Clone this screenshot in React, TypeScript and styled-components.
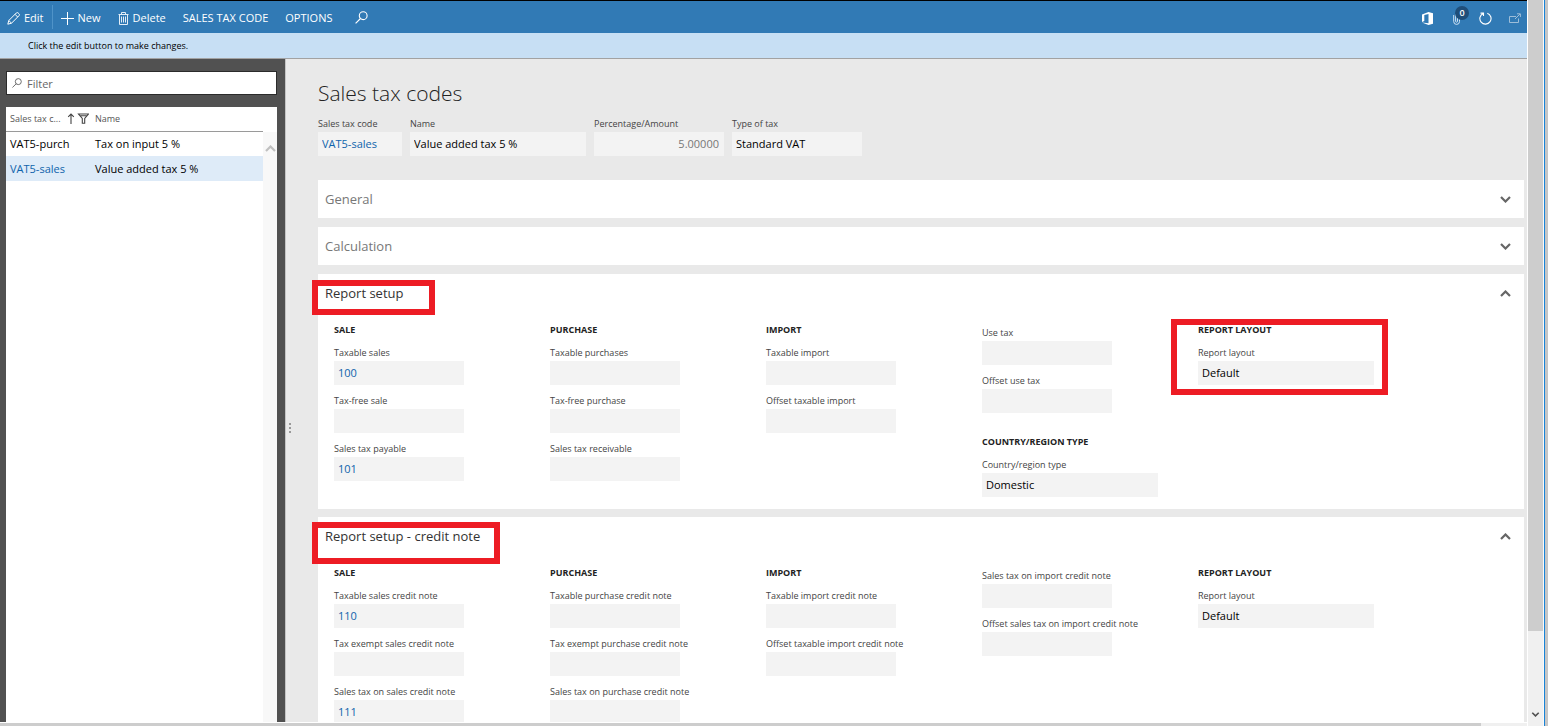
import React, { useId } from "react";
import styled, { createGlobalStyle } from "styled-components";

const GlobalStyle = createGlobalStyle`
  * { box-sizing: border-box; }
  html, body { margin: 0; padding: 0; overflow: hidden; }
  body, button, input { font-family: "Open Sans", "Noto Sans", sans-serif; }
`;

const Window = styled.div`
  display: flex;
  height: 100vh;
  overflow: hidden;
  background: #fff;
`;

const Page = styled.div`
  flex: 1;
  min-width: 0;
  display: flex;
  flex-direction: column;
  border-top: 1px solid #000;
`;

const Toolbar = styled.header`
  display: flex;
  justify-content: space-between;
  flex: none;
  height: 32px;
  background: #317ab5;
  color: #fff;
`;

const ToolGroup = styled.div<{ $gap: number; $pad: string }>`
  display: flex;
  align-items: center;
  gap: ${(p) => p.$gap}px;
  padding: ${(p) => p.$pad};
`;

const ToolButton = styled.button`
  display: flex;
  align-items: center;
  gap: 4px;
  height: 32px;
  padding: 2px 0 0;
  border: 0;
  background: none;
  color: inherit;
  font-size: 11px;
  line-height: 16px;
  white-space: nowrap;
  position: relative;
  svg { display: block; flex: none; }
`;

const SearchButton = styled(ToolButton)`
  padding: 0 0 0 6px;
`;

const Divider = styled.span`
  width: 1px;
  height: 24px;
  background: #4f93c8;
`;

const Badge = styled.span`
  position: absolute;
  top: 5px;
  left: 5px;
  width: 14px;
  height: 14px;
  border-radius: 50%;
  background: #1f4e79;
  font-size: 9px;
  font-weight: 600;
  line-height: 14px;
  text-align: center;
`;

const Notice = styled.div`
  flex: none;
  height: 26px;
  padding: 1px 28px 0;
  border-bottom: 1px solid #a2a2a2;
  background: #c7dff4;
  color: #000;
  font-size: 9px;
  line-height: 24px;
`;

const Workspace = styled.div`
  flex: 1;
  min-height: 0;
  display: flex;
  border-bottom: 1px solid #fff;
`;

const Sidebar = styled.aside`
  flex: none;
  width: 285px;
  display: flex;
  flex-direction: column;
  gap: 12px;
  padding: 12px 8px 0 6px;
  background: #515151;
`;

const FilterBox = styled.label`
  display: flex;
  align-items: center;
  gap: 5px;
  height: 24px;
  padding: 0 5px;
  border: 1px solid #2b2b2b;
  background: #fff;
  svg { flex: none; }
`;

const FilterInput = styled.input`
  flex: 1;
  min-width: 0;
  padding: 0;
  border: 0;
  outline: 0;
  font-size: 11px;
  color: #333;
  &::placeholder { color: #666; opacity: 1; }
`;

const List = styled.div`
  flex: 1;
  min-height: 0;
  display: flex;
  background: #fff;
`;

const Table = styled.table`
  flex: 1;
  align-self: flex-start;
  border-collapse: collapse;
  table-layout: fixed;
  font-size: 11px;
`;

const HeadCell = styled.th<{ $width?: number }>`
  width: ${(p) => (p.$width ? `${p.$width}px` : "auto")};
  height: 24px;
  padding: 0 0 0 4px;
  border-bottom: 1px solid #9a9a9a;
  color: #555;
  font-size: 9px;
  font-weight: 400;
  text-align: left;
`;

const HeadLabel = styled.span`
  display: flex;
  align-items: center;
  svg { flex: none; }
`;

const HeadText = styled.span`
  width: 57px;
  white-space: nowrap;
`;

const Row = styled.tr<{ $selected?: boolean }>`
  background: ${(p) => (p.$selected ? "#deebf8" : "#fff")};
`;

const Cell = styled.td<{ $link?: boolean }>`
  height: 25px;
  padding: 0 0 0 4px;
  color: ${(p) => (p.$link ? "#0f63ac" : "#000")};
`;

const ListScroll = styled.div`
  flex: none;
  width: 14px;
  margin-top: 25px;
  padding-top: 13px;
  background: #f8f8f8;
  svg { display: block; margin: 0 auto; }
`;

const Splitter = styled.div`
  flex: none;
  width: 8px;
  display: flex;
  align-items: center;
  justify-content: center;
  border-left: 1px solid #c4c4c4;
  background: #e9e9e9;
  padding-top: 74px;
`;

const Main = styled.main`
  flex: 1;
  min-width: 0;
  overflow: hidden;
  padding: 18px 3px 0 25px;
  background: #e9e9e9;
`;

const Title = styled.h1`
  margin: 0;
  color: #222;
  font-size: 21px;
  font-weight: 300;
  line-height: 32px;
`;

const Summary = styled.div`
  display: flex;
  gap: 8px;
  padding: 7px 0 16px;
`;

const FieldBox = styled.div<{ $width: number }>`
  display: flex;
  flex-direction: column;
  width: ${(p) => p.$width}px;
  margin-bottom: 8px;
`;

const FieldLabel = styled.label`
  color: #444;
  font-size: 9px;
  line-height: 16px;
  white-space: nowrap;
`;

const FieldInput = styled.input<{ $tone: Tone }>`
  width: 100%;
  height: 24px;
  padding: 0 5px 2px 4px;
  border: 0;
  outline: 0;
  background: #f3f3f3;
  color: ${(p) => ({ text: "#000", link: "#0f63ac", muted: "#777" })[p.$tone]};
  font-size: 11px;
  text-align: ${(p) => (p.$tone === "muted" ? "right" : "left")};
`;

const Card = styled.section<{ $open?: boolean }>`
  position: relative;
  margin-bottom: ${(p) => (p.$open ? 8 : 9)}px;
  background: #fff;
`;

const CardHeader = styled.button<{ $open?: boolean }>`
  display: flex;
  align-items: center;
  justify-content: space-between;
  width: 100%;
  height: 38px;
  padding: 0 13px 0 7px;
  border: 0;
  background: none;
  color: ${(p) => (p.$open ? "#333" : "#777")};
  font-size: 13px;
  line-height: 20px;
  text-align: left;
`;

const CardBody = styled.div`
  display: flex;
  padding: 8px 16px 4px;
`;

const Column = styled.div`
  flex: none;
  width: 216px;
  display: flex;
  flex-direction: column;
  gap: 11px;
`;

const GroupBox = styled.div`
  position: relative;
`;

const GroupTitle = styled.h2`
  margin: 0 0 5px;
  height: 20px;
  color: #222;
  font-size: 9px;
  font-weight: 700;
  line-height: 20px;
`;

const GroupSpacer = styled.div`
  height: 5px;
`;

const Highlight = styled.div<{ $x: number; $y: number; $w: number; $h: number }>`
  position: absolute;
  left: ${(p) => p.$x}px;
  top: ${(p) => p.$y}px;
  width: ${(p) => p.$w}px;
  height: ${(p) => p.$h}px;
  border: 6px solid #ed1c24;
  pointer-events: none;
`;

const HorizontalTrack = styled.div`
  flex: none;
  height: 3px;
  background: #f0f0f0;
`;

const HorizontalThumb = styled.div`
  width: 97%;
  height: 100%;
  background: #cdcdcd;
`;

const VerticalTrack = styled.div`
  flex: none;
  width: 17px;
  display: flex;
  flex-direction: column;
  align-items: center;
  justify-content: space-between;
  border-left: 1px solid #fff;
  border-right: 1px solid #fafafa;
  padding-bottom: 9px;
  background: #f0f0f0;
`;

const VerticalThumb = styled.div`
  width: 100%;
  height: 88%;
  background: #cdcdcd;
`;

const WindowEdge = styled.div`
  flex: none;
  width: 4px;
  border-left: 1px solid #1883d7;
  background: #c6c6c6;
`;

type Tone = "text" | "link" | "muted";
type FieldData = { label: string; value?: string; width?: number; tone?: Tone };
type GroupData = { title?: string; fields: FieldData[]; highlighted?: boolean };

const Chevron = ({ up, size = 11, color = "#666", weight = 2.2 }: { up?: boolean; size?: number; color?: string; weight?: number }) => (
  <svg width={size} height={size - 4} viewBox="0 0 11 7" fill="none" stroke={color} strokeWidth={weight} aria-hidden="true">
    <path d={up ? "M1 6l4.500-4.500L10 6" : "M1 1l4.500 4.500L10 1"} />
  </svg>
);

const SearchIcon = ({ size, color }: { size: number; color: string }) => (
  <svg width={size} height={size} viewBox="0 0 13 13" fill="none" stroke={color} strokeWidth="1.100" aria-hidden="true">
    <circle cx="8.200" cy="4.700" r="3.900" />
    <path d="M5.500 7.500L.600 12.300" />
  </svg>
);

const PencilIcon = () => (
  <svg width="13" height="13" viewBox="0 0 13 13" fill="none" stroke="#fff" strokeWidth="1" aria-hidden="true">
    <path d="M.800 12.200l1-3.700L9.300 1a1.300 1.300 0 0 1 1.900 0l.800.800a1.300 1.300 0 0 1 0 1.900L4.500 11.200zM8 2.300L10.700 5M1.800 8.500l2.700 2.700" />
  </svg>
);

const PlusIcon = () => (
  <svg width="13" height="13" viewBox="0 0 13 13" stroke="#fff" strokeWidth="1" aria-hidden="true">
    <path d="M6.500 0v13M0 6.500h13" />
  </svg>
);

const TrashIcon = () => (
  <svg width="11" height="13" viewBox="0 0 11 13" fill="none" stroke="#e4eef7" strokeWidth="1" aria-hidden="true">
    <path d="M.500 2.500h10M3.500 2.500v-2h4v2M1.500 2.500v10h8v-10M3.500 4.500v6M5.500 4.500v6M7.500 4.500v6" />
  </svg>
);

const OfficeIcon = () => (
  <svg width="11" height="13" viewBox="0 0 11 13" fill="#fff" aria-hidden="true">
    <path d="M0 2.500L6.500 0 11 1.200v10.600L6.500 13 0 10.500l6.500.800V2L2.300 3v6L0 10z" />
  </svg>
);

const ClipIcon = () => (
  <svg width="12" height="13" viewBox="-3 0 12 13" fill="none" stroke="#cfe2f3" strokeWidth="1" aria-hidden="true">
    <path d="M.700 3v6.500a2.800 2.800 0 0 0 5.800 0V3a2 2 0 0 0-3.900 0v6.500a1 1 0 0 0 1.900 0V4" />
  </svg>
);

const RefreshIcon = () => (
  <svg width="13" height="13" viewBox="0 0 13 13" fill="none" stroke="#fff" strokeWidth="1.100" aria-hidden="true">
    <path d="M8.300 1.200a5.600 5.600 0 1 1-4.200.200M1.500 1.100h3v3" />
  </svg>
);

const PopOutIcon = () => (
  <svg width="12" height="11" viewBox="0 0 12 11" fill="none" stroke="#9dbdd8" strokeWidth="1" aria-hidden="true">
    <path d="M7 3.500H.500v6h9v-4M6 6l5-5M8 .800h3.400V4" />
  </svg>
);

const SortIcon = () => (
  <svg width="8" height="11" viewBox="0 0 8 11" fill="none" stroke="#444" strokeWidth="1.100" aria-hidden="true">
    <path d="M4 11V1M1.200 3.800L4 1l2.800 2.800" />
  </svg>
);

const FunnelIcon = () => (
  <svg width="14" height="11" viewBox="0 0 14 11" fill="none" stroke="#444" strokeWidth="1.100" aria-hidden="true">
    <path d="M3.500 1h10L9.700 5.500v4.800H7.300V5.500zM5 2.800h7" />
  </svg>
);

const GripIcon = () => (
  <svg width="2" height="10" viewBox="0 0 2 10" fill="#999" aria-hidden="true">
    <path d="M0 0h2v2H0zM0 4h2v2H0zM0 8h2v2H0z" />
  </svg>
);

const Field = ({ label, value = "", width = 130, tone = "text" }: FieldData) => {
  const id = useId();
  return (
    <FieldBox $width={width}>
      <FieldLabel htmlFor={id}>{label}</FieldLabel>
      <FieldInput id={id} $tone={tone} value={value} readOnly />
    </FieldBox>
  );
};

const Group = ({ title, fields, highlighted }: GroupData) => (
  <GroupBox>
    {title ? <GroupTitle>{title}</GroupTitle> : <GroupSpacer />}
    {fields.map((f) => (
      <Field key={f.label} {...f} />
    ))}
    {highlighted && <Highlight $x={-27} $y={-1} $w={217} $h={76} />}
  </GroupBox>
);

const summary: FieldData[] = [
  { label: "Sales tax code", value: "VAT5-sales", width: 84, tone: "link" },
  { label: "Name", value: "Value added tax 5 %", width: 176 },
  { label: "Percentage/Amount", value: "5.00000", tone: "muted" },
  { label: "Type of tax", value: "Standard VAT" },
];

const reportSetup: GroupData[][] = [
  [{ title: "SALE", fields: [
    { label: "Taxable sales", value: "100", tone: "link" },
    { label: "Tax-free sale" },
    { label: "Sales tax payable", value: "101", tone: "link" },
  ] }],
  [{ title: "PURCHASE", fields: [
    { label: "Taxable purchases" },
    { label: "Tax-free purchase" },
    { label: "Sales tax receivable" },
  ] }],
  [{ title: "IMPORT", fields: [{ label: "Taxable import" }, { label: "Offset taxable import" }] }],
  [
    { fields: [{ label: "Use tax" }, { label: "Offset use tax" }] },
    { title: "COUNTRY/REGION TYPE", fields: [{ label: "Country/region type", value: "Domestic", width: 176 }] },
  ],
  [{ title: "REPORT LAYOUT", highlighted: true, fields: [{ label: "Report layout", value: "Default", width: 176 }] }],
];

const creditNote: GroupData[][] = [
  [{ title: "SALE", fields: [
    { label: "Taxable sales credit note", value: "110", tone: "link" },
    { label: "Tax exempt sales credit note" },
    { label: "Sales tax on sales credit note", value: "111", tone: "link" },
  ] }],
  [{ title: "PURCHASE", fields: [
    { label: "Taxable purchase credit note" },
    { label: "Tax exempt purchase credit note" },
    { label: "Sales tax on purchase credit note" },
  ] }],
  [{ title: "IMPORT", fields: [{ label: "Taxable import credit note" }, { label: "Offset taxable import credit note" }] }],
  [{ fields: [{ label: "Sales tax on import credit note" }, { label: "Offset sales tax on import credit note" }] }],
  [{ title: "REPORT LAYOUT", fields: [{ label: "Report layout", value: "Default", width: 176 }] }],
];

const FastTab = ({ title, columns, children }: { title: string; columns?: GroupData[][]; children?: React.ReactNode }) => (
  <Card $open={!!columns}>
    <CardHeader $open={!!columns} aria-expanded={!!columns}>
      {title}
      <Chevron up={!!columns} />
    </CardHeader>
    {columns && (
      <CardBody>
        {columns.map((groups, i) => (
          <Column key={i}>
            {groups.map((g, j) => (
              <Group key={j} {...g} />
            ))}
          </Column>
        ))}
      </CardBody>
    )}
    {children}
  </Card>
);

export default function App() {
  return (
    <Window>
      <GlobalStyle />
      <Page>
        <Toolbar>
          <ToolGroup $gap={17} $pad="0 0 0 7px">
            <ToolGroup $gap={8} $pad="0">
              <ToolButton><PencilIcon />Edit</ToolButton>
              <Divider />
              <ToolButton><PlusIcon />New</ToolButton>
            </ToolGroup>
            <ToolButton><TrashIcon />Delete</ToolButton>
            <ToolButton>SALES TAX CODE</ToolButton>
            <ToolButton>OPTIONS</ToolButton>
            <SearchButton aria-label="Search"><SearchIcon size={13} color="#fff" /></SearchButton>
          </ToolGroup>
          <ToolGroup $gap={17} $pad="0 6px 0 0">
            <ToolButton aria-label="Office"><OfficeIcon /></ToolButton>
            <ToolButton aria-label="Attachments"><ClipIcon /><Badge>0</Badge></ToolButton>
            <ToolButton aria-label="Refresh"><RefreshIcon /></ToolButton>
            <ToolButton aria-label="Open in new window"><PopOutIcon /></ToolButton>
          </ToolGroup>
        </Toolbar>
        <Notice>Click the edit button to make changes.</Notice>
        <Workspace>
          <Sidebar>
            <FilterBox>
              <SearchIcon size={10} color="#555" />
              <FilterInput placeholder="Filter" aria-label="Filter" />
            </FilterBox>
            <List>
              <Table>
                <thead>
                  <tr>
                    <HeadCell $width={85}>
                      <HeadLabel><HeadText>Sales tax c...</HeadText><SortIcon /><FunnelIcon /></HeadLabel>
                    </HeadCell>
                    <HeadCell>Name</HeadCell>
                  </tr>
                </thead>
                <tbody>
                  <Row><Cell>VAT5-purch</Cell><Cell>Tax on input 5 %</Cell></Row>
                  <Row $selected><Cell $link>VAT5-sales</Cell><Cell>Value added tax 5 %</Cell></Row>
                </tbody>
              </Table>
              <ListScroll><Chevron up color="#c0c0c0" /></ListScroll>
            </List>
          </Sidebar>
          <Splitter><GripIcon /></Splitter>
          <Main>
            <Title>Sales tax codes</Title>
            <Summary>{summary.map((f) => <Field key={f.label} {...f} />)}</Summary>
            <FastTab title="General" />
            <FastTab title="Calculation" />
            <FastTab title="Report setup" columns={reportSetup}>
              <Highlight $x={-6} $y={6} $w={123} $h={35} />
            </FastTab>
            <FastTab title="Report setup - credit note" columns={creditNote}>
              <Highlight $x={-6} $y={5} $w={188} $h={42} />
            </FastTab>
          </Main>
        </Workspace>
        <HorizontalTrack><HorizontalThumb /></HorizontalTrack>
      </Page>
      <VerticalTrack>
        <VerticalThumb />
        <Chevron size={9} color="#505050" />
      </VerticalTrack>
      <WindowEdge />
    </Window>
  );
}
